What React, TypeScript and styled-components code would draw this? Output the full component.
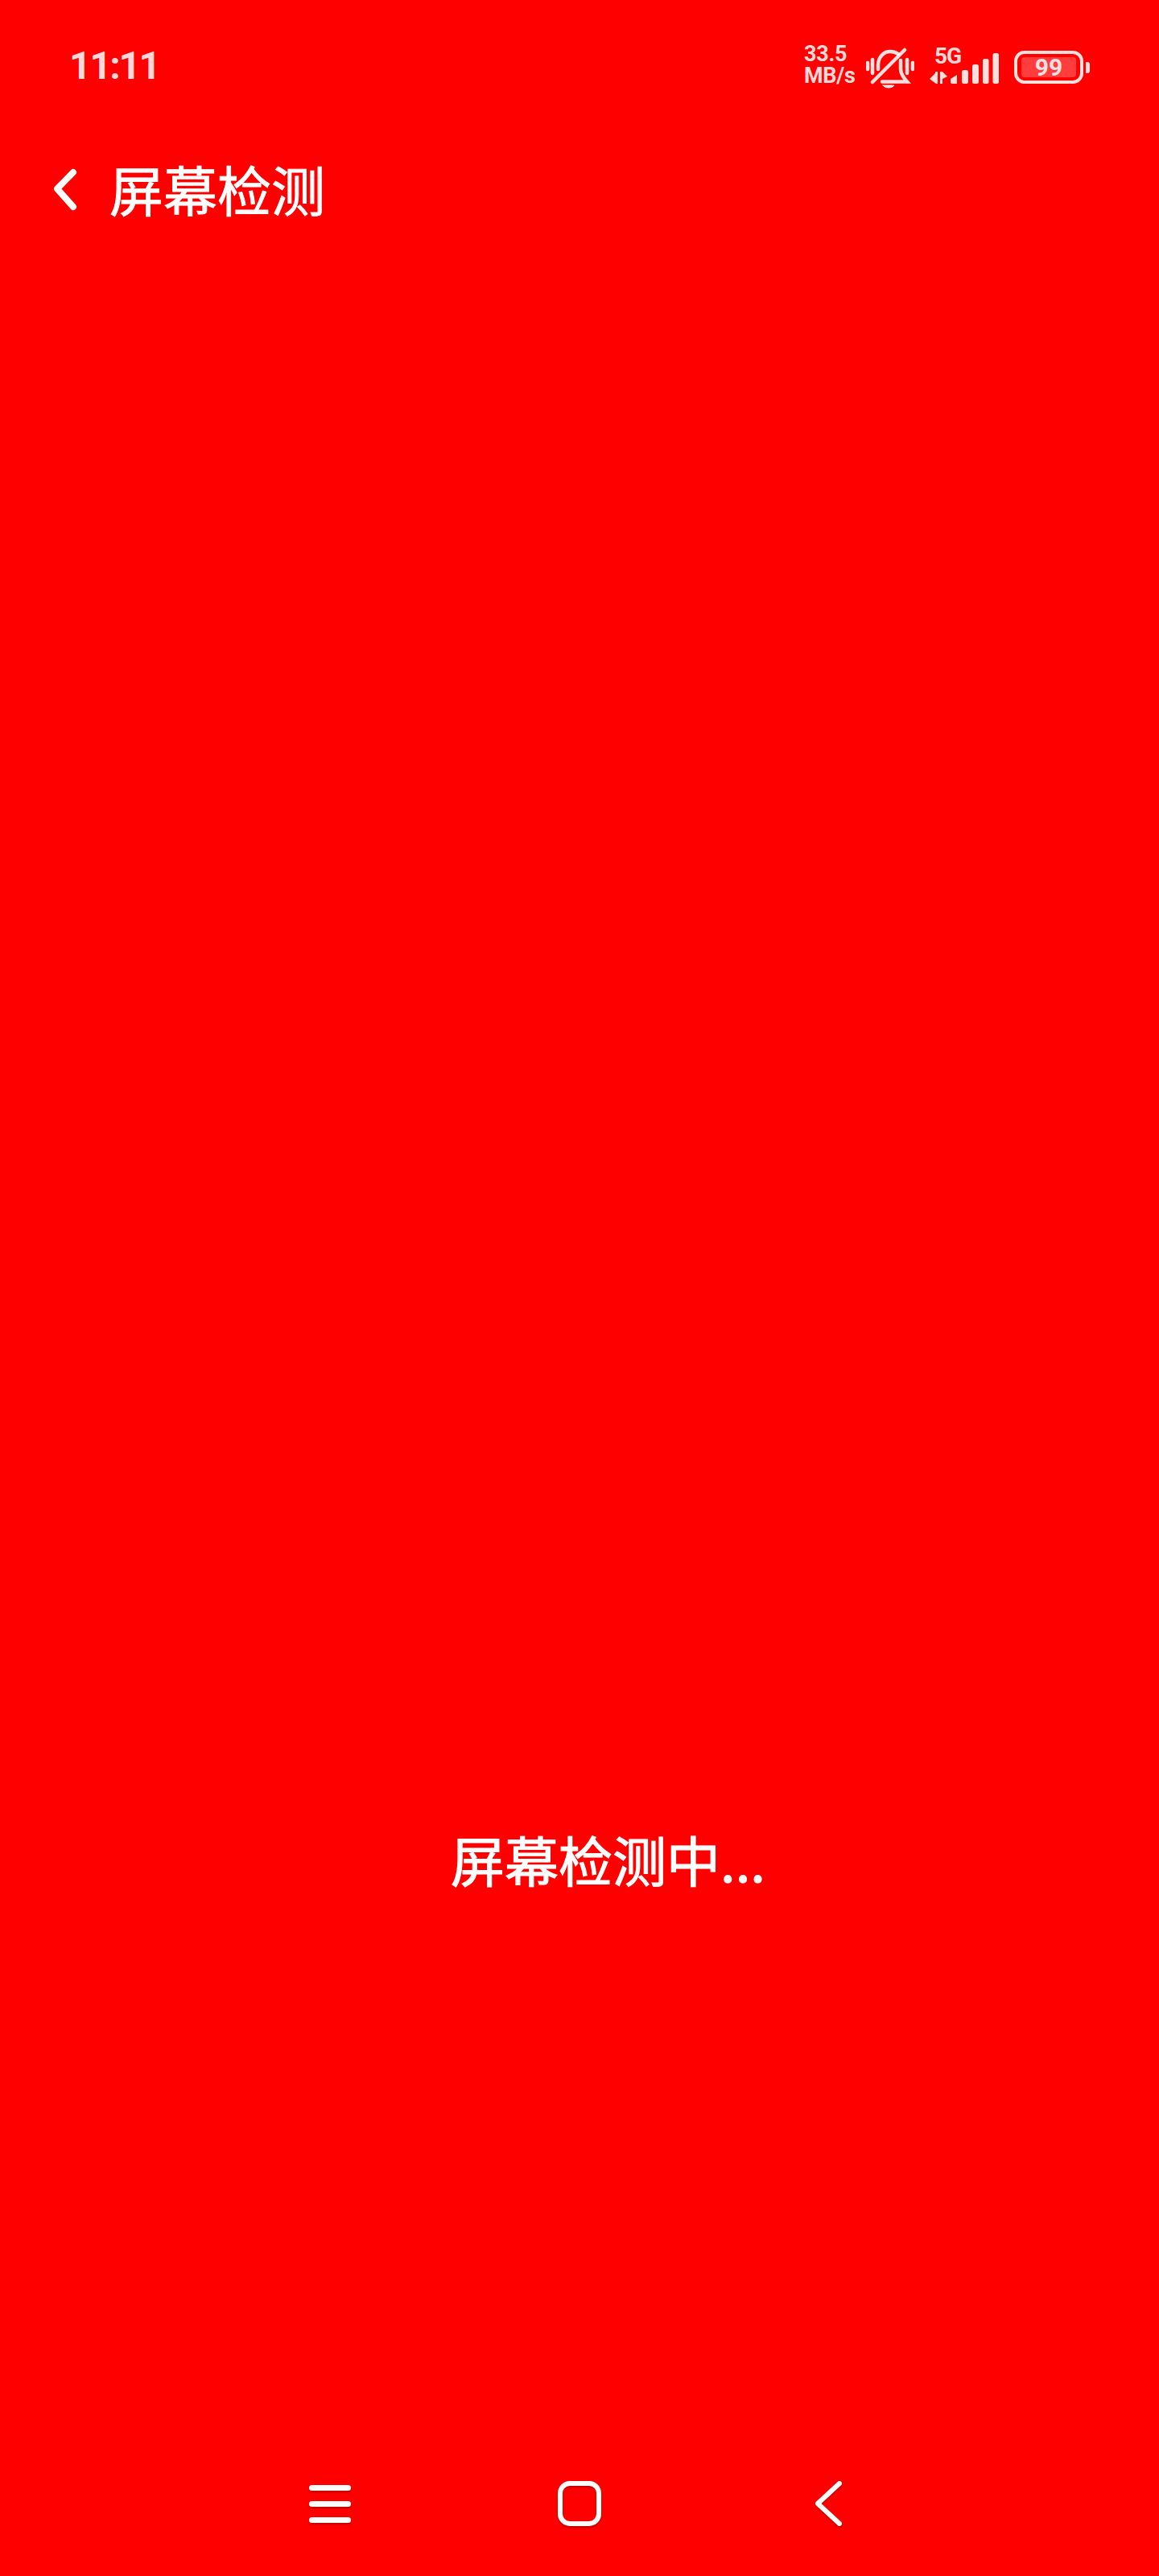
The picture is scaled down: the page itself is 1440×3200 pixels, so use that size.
import React from "react";
import styled, { createGlobalStyle } from "styled-components";

const GlobalStyle = createGlobalStyle`
  html, body {
    margin: 0;
    padding: 0;
    background: #ff0000;
  }
`;

const Screen = styled.div`
  width: 1440px;
  height: 3200px;
  background: #ff0000;
  color: #ffffff;
  display: flex;
  flex-direction: column;
  font-family: "Noto Sans CJK SC", "Noto Sans", sans-serif;
`;

const StatusBar = styled.div`
  height: 160px;
  box-sizing: border-box;
  padding: 52px 86px 0 86px;
  display: flex;
  justify-content: space-between;
  align-items: flex-start;
  color: rgba(255, 255, 255, 0.87);
`;

const Time = styled.div`
  font-family: Roboto, "Liberation Sans", sans-serif;
  font-size: 48px;
  font-weight: 700;
  line-height: 58px;
  letter-spacing: -2.4px;
  margin-top: 1px;
`;

const StatusIcons = styled.div`
  display: flex;
  align-items: flex-start;
`;

const Speed = styled.div`
  font-family: Roboto, "Liberation Sans", sans-serif;
  font-size: 27px;
  font-weight: 700;
  line-height: 27px;
  letter-spacing: -0.3px;
  margin-top: 2px;
  width: 77px;
`;

const BellIcon = styled.svg`
  display: block;
  width: 60px;
  height: 52px;
  margin-top: 7px;
  margin-right: 19px;
`;

const Signal = styled.div`
  position: relative;
  width: 86px;
  height: 44px;
  margin-top: 10px;
  margin-right: 19px;
`;

const SignalLabel = styled.span`
  position: absolute;
  left: 6px;
  top: -8px;
  font-family: Roboto, "Liberation Sans", sans-serif;
  font-size: 28px;
  font-weight: 700;
  line-height: 32px;
  letter-spacing: -1px;
`;

const SignalBars = styled.svg`
  display: block;
  width: 86px;
  height: 44px;
`;

const Battery = styled.div`
  display: flex;
  align-items: center;
  gap: 3px;
  margin-top: 11px;
`;

const BatteryBody = styled.div`
  width: 86px;
  height: 41px;
  box-sizing: border-box;
  border: 4px solid rgba(255, 255, 255, 0.87);
  border-radius: 13px;
  padding: 4px 5px;
`;

const BatteryFill = styled.div`
  height: 100%;
  border-radius: 4px;
  background: rgba(255, 255, 255, 0.24);
  display: flex;
  align-items: center;
  justify-content: center;
  font-family: Roboto, "Liberation Sans", sans-serif;
  font-size: 30px;
  font-weight: 700;
  line-height: 1;
`;

const BatteryCap = styled.div`
  width: 5px;
  height: 14px;
  border-radius: 0 3px 3px 0;
  background: rgba(255, 255, 255, 0.87);
`;

const Header = styled.div`
  height: 148px;
  box-sizing: border-box;
  padding-left: 64px;
  display: flex;
  align-items: center;
`;

const BackIcon = styled.svg`
  display: block;
  width: 38px;
  height: 60px;
  margin-top: 4px;
  margin-right: 34px;
`;

const Title = styled.h1`
  margin: 0;
  font-size: 67px;
  font-weight: 400;
  line-height: 90px;
  -webkit-text-stroke: 0.9px #ffffff;
`;

const Main = styled.div`
  flex: 1;
  padding: 1956px 0 0 560px;
`;

const Progress = styled.div`
  font-size: 67px;
  font-weight: 400;
  line-height: 90px;
  -webkit-text-stroke: 1.2px #ffffff;
`;

const NavBar = styled.div`
  height: 160px;
  box-sizing: border-box;
  padding-bottom: 20px;
  display: flex;
  justify-content: center;
  align-items: center;
`;

const NavButton = styled.div`
  width: 310px;
  display: flex;
  justify-content: center;
  filter: drop-shadow(0 2px 1px rgba(120, 0, 0, 0.45));
`;

const MenuIcon = styled.div`
  width: 52px;
  display: flex;
  flex-direction: column;
  gap: 13px;
`;

const MenuLine = styled.div`
  height: 7px;
  border-radius: 4px;
  background: #ffffff;
`;

const HomeIcon = styled.div`
  width: 54px;
  height: 56px;
  box-sizing: border-box;
  border: 6px solid #ffffff;
  border-radius: 15px;
`;

const NavBackIcon = styled.svg`
  display: block;
  width: 40px;
  height: 58px;
  margin-left: -4px;
`;

export default function App() {
  return (
    <Screen>
      <GlobalStyle />
      <StatusBar>
        <Time>11:11</Time>
        <StatusIcons>
          <Speed>
            33.5
            <br />
            MB/s
          </Speed>
          <BellIcon viewBox="0 0 60 52" fill="none" stroke="currentColor" strokeWidth="4.5" strokeLinecap="round">
            <path d="M15 27V22C15 12 22 5 30 5C34 5 37 6 40 8" />
            <path d="M43 16V27C43 33 47 38 51 42.5H20" />
            <path d="M8 43L48 3" />
            <path d="M2 19V27M8 15V32M51 15V32M58 19V27" />
            <path d="M21 47H35C33 51 23 51 21 47Z" fill="currentColor" strokeWidth="1" />
          </BellIcon>
          <Signal>
            <SignalLabel>5G</SignalLabel>
            <SignalBars viewBox="0 0 86 44" fill="currentColor">
              <path d="M0 36L7 29V27H10V42H8Z" />
              <path d="M13 27H16L22 33L16 36V42H13Z" />
              <path d="M26 36L34 31V42H28C27 42 26 41 26 40Z" />
              <rect x="40" y="25" width="8" height="17" rx="2.5" />
              <rect x="53" y="18" width="8" height="24" rx="2.5" />
              <rect x="66" y="11" width="7.5" height="31" rx="2.5" />
              <rect x="78.5" y="4" width="7.5" height="38" rx="2.5" />
            </SignalBars>
          </Signal>
          <Battery>
            <BatteryBody>
              <BatteryFill>99</BatteryFill>
            </BatteryBody>
            <BatteryCap />
          </Battery>
        </StatusIcons>
      </StatusBar>
      <Header>
        <BackIcon viewBox="0 0 38 60" fill="none" stroke="#ffffff" strokeWidth="8" strokeLinecap="round" strokeLinejoin="round">
          <path d="M27 8L7 28.5L27 51" />
        </BackIcon>
        <Title>屏幕检测</Title>
      </Header>
      <Main>
        <Progress>屏幕检测中...</Progress>
      </Main>
      <NavBar>
        <NavButton>
          <MenuIcon>
            <MenuLine />
            <MenuLine />
            <MenuLine />
          </MenuIcon>
        </NavButton>
        <NavButton>
          <HomeIcon />
        </NavButton>
        <NavButton>
          <NavBackIcon viewBox="0 0 40 58" fill="none" stroke="#ffffff" strokeWidth="6" strokeLinecap="round" strokeLinejoin="round">
            <path d="M35 4L8 29L35 54" />
          </NavBackIcon>
        </NavButton>
      </NavBar>
    </Screen>
  );
}
